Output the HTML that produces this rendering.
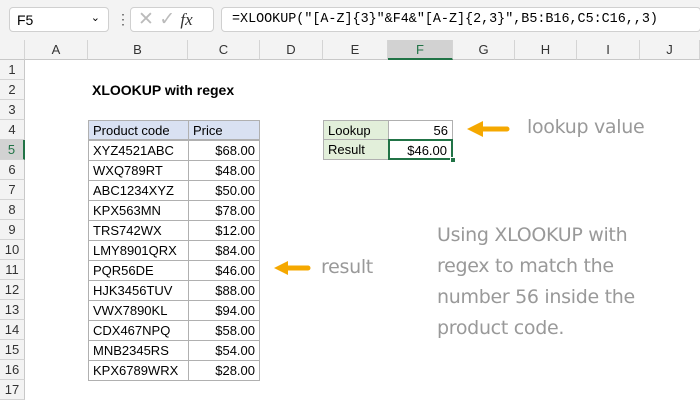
<!DOCTYPE html><html><head><style>
body{margin:0;width:700px;height:400px;overflow:hidden;background:#fff;font-family:"Liberation Sans",sans-serif;font-size:13px;position:relative}
div{position:absolute;box-sizing:border-box}
.ch{top:40px;height:20px;background:#f3f3f3;border-right:1px solid #d4d4d4;border-bottom:1px solid #c8c8c8;text-align:center;line-height:20px;color:#333}
.rh{left:0;width:25px;height:20px;background:#f3f3f3;border-bottom:1px solid #d4d4d4;border-right:1px solid #c8c8c8;text-align:center;line-height:20px;color:#333}
.c{height:20px;line-height:19px;padding:0 4px;border:1px solid #b0b0b0;color:#000;white-space:nowrap}
.n{text-align:right}
.hand{color:#999;font-family:"DejaVu Sans",sans-serif;font-size:19px;letter-spacing:-0.3px}
td{border:1px solid #b0b0b0;height:19px;padding:0 4px;background:#fff}td:first-child{width:91px}td:last-child{width:63px;text-align:right}
</style></head><body>
<div style="left:0;top:0;width:700px;height:40px;background:#f3f3f3"></div>
<div style="left:9px;top:7px;width:100px;height:25px;background:#fff;border:1px solid #d0d0d0;border-radius:4px;padding:4px 7px;font-size:14px">F5<span style="position:absolute;right:8px;top:3px;font-size:11px">&#8964;</span></div>
<div style="left:116px;top:11px;font-size:14px;color:#555">&#8942;</div>
<div style="left:130px;top:7px;width:84px;height:25px;background:#fff;border:1px solid #d0d0d0;border-radius:4px;color:#bbb;font-size:19px;padding:0 7px;line-height:24px">✕ ✓ <i style="color:#333;font-family:'Liberation Serif';font-size:17px">fx</i></div>
<div style="left:221px;top:7px;width:480px;height:25px;background:#fff;border:1px solid #d0d0d0;border-radius:4px;padding:4px 10px;font-size:13.4px;font-family:'Liberation Mono',monospace;white-space:nowrap">=XLOOKUP("[A-Z]{3}"&amp;F4&amp;"[A-Z]{2,3}",B5:B16,C5:C16,,3)</div>
<div class="ch" style="left:0;width:25px"></div>
<div class="ch" style="left:25px;width:63px">A</div>
<div class="ch" style="left:88px;width:100px">B</div>
<div class="ch" style="left:188px;width:72px">C</div>
<div class="ch" style="left:260px;width:63px">D</div>
<div class="ch" style="left:323px;width:65px">E</div>
<div class="ch" style="left:388px;width:65px;background:#d2d2d2;border-bottom:2px solid #217346;color:#217346">F</div>
<div class="ch" style="left:453px;width:62px">G</div>
<div class="ch" style="left:515px;width:62px">H</div>
<div class="ch" style="left:577px;width:63px">I</div>
<div class="ch" style="left:640px;width:60px">J</div>
<div class="rh" style="top:60px">1</div><div class="rh" style="top:80px">2</div><div class="rh" style="top:100px">3</div><div class="rh" style="top:120px">4</div>
<div class="rh" style="top:140px;background:#d2d2d2;border-right:2px solid #217346;color:#217346">5</div>
<div class="rh" style="top:160px">6</div><div class="rh" style="top:180px">7</div><div class="rh" style="top:200px">8</div><div class="rh" style="top:220px">9</div><div class="rh" style="top:240px">10</div><div class="rh" style="top:260px">11</div><div class="rh" style="top:280px">12</div><div class="rh" style="top:300px">13</div><div class="rh" style="top:320px">14</div><div class="rh" style="top:340px">15</div><div class="rh" style="top:360px">16</div><div class="rh" style="top:380px">17</div>
<div style="left:92px;top:82px;font-weight:bold;font-size:14px">XLOOKUP with regex</div>
<div class="c" style="left:88px;top:120px;width:101px;background:#d9e1f2">Product code</div>
<div class="c" style="left:188px;top:120px;width:72px;background:#d9e1f2">Price</div>
<div style="left:88px;top:140px;width:172px">
<table style="border-collapse:collapse;font-size:13px" cellpadding="0">
<tr><td>XYZ4521ABC</td><td>$68.00</td></tr>
<tr><td>WXQ789RT</td><td>$48.00</td></tr>
<tr><td>ABC1234XYZ</td><td>$50.00</td></tr>
<tr><td>KPX563MN</td><td>$78.00</td></tr>
<tr><td>TRS742WX</td><td>$12.00</td></tr>
<tr><td>LMY8901QRX</td><td>$84.00</td></tr>
<tr><td>PQR56DE</td><td>$46.00</td></tr>
<tr><td>HJK3456TUV</td><td>$88.00</td></tr>
<tr><td>VWX7890KL</td><td>$94.00</td></tr>
<tr><td>CDX467NPQ</td><td>$58.00</td></tr>
<tr><td>MNB2345RS</td><td>$54.00</td></tr>
<tr><td>KPX6789WRX</td><td>$28.00</td></tr>
</table></div>
<div class="c" style="left:323px;top:120px;width:66px;background:#e2efda">Lookup</div>
<div class="c n" style="left:388px;top:120px;width:65px">56</div>
<div class="c" style="left:323px;top:139px;width:66px;background:#e2efda;height:21px">Result</div>
<div class="c n" style="left:388px;top:139px;width:65px;height:21px;border:2px solid #217346">$46.00</div>
<div style="left:450px;top:157px;width:6px;height:6px;background:#217346;border:1px solid #fff"></div>
<svg style="position:absolute;left:465px;top:119px" width="45" height="20"><path d="M42 10H16" stroke="#f5a800" stroke-width="5" stroke-linecap="round"/><path d="M2 10L18 2V18Z" fill="#f5a800"/></svg>
<svg style="position:absolute;left:272px;top:258px" width="40" height="20"><path d="M36 10H14" stroke="#f5a800" stroke-width="5" stroke-linecap="round"/><path d="M2 10L16 3V17Z" fill="#f5a800"/></svg>
<div class="hand" style="left:527px;top:116px">lookup value</div>
<div class="hand" style="left:321px;top:256px">result</div>
<div class="hand" style="left:437px;top:220px;line-height:31px;width:260px">Using XLOOKUP with<br>regex to match the<br>number 56 inside the<br>product code.</div>
</body></html>
